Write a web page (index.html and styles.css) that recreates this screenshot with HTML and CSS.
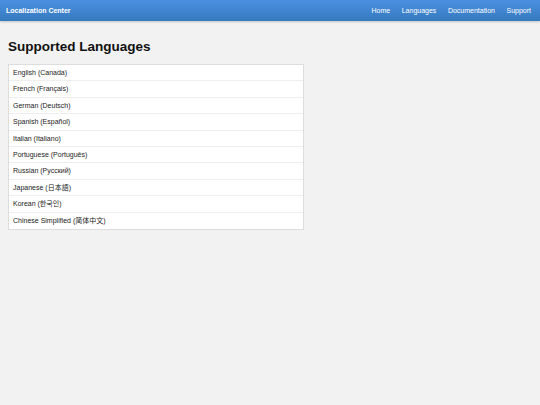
FILE: index.html
```html
<!DOCTYPE html>
<html lang="en">
<head>
    <meta charset="utf-8">
    <link rel="stylesheet" href="styles.css">
    <title>Localization Center</title>
</head>
<body>
    <header class="topbar">
        <div class="brand">Localization Center</div>
        <nav class="nav">
            <a href="#">Home</a>
            <a href="#">Languages</a>
            <a href="#">Documentation</a>
            <a href="#">Support</a>
        </nav>
    </header>
    <main class="content">
        <h1 class="title">Supported Languages</h1>
        <ul class="lang-list">
            <li>English (Canada)</li>
            <li>French (Français)</li>
            <li>German (Deutsch)</li>
            <li>Spanish (Español)</li>
            <li>Italian (Italiano)</li>
            <li>Portuguese (Português)</li>
            <li>Russian (Русский)</li>
            <li>Japanese (日本語)</li>
            <li>Korean (한국인)</li>
            <li>Chinese Simplified (简体中文)</li>
        </ul>
    </main>
</body>
</html>
```

FILE: styles.css
```css
body {
    margin: 0;
    background-color: #f2f2f2;
    font-family: "Liberation Sans", Arial, "Noto Sans CJK SC", sans-serif;
    color: #222;
}

.topbar {
    display: flex;
    justify-content: space-between;
    align-items: center;
    height: 21px;
    padding: 0 9px 0 6px;
    background: linear-gradient(to bottom, #4a90e2, #357abd);
    box-shadow: 0 1px 2px rgba(0, 0, 0, 0.2);
    color: #fff;
    font-size: 7px;
}

.brand {
    font-weight: bold;
}

.nav {
    display: flex;
    gap: 11.5px;
}

.nav a {
    color: #fff;
    text-decoration: none;
}

.content {
    padding: 0 8px;
}

.title {
    margin: 18px 0 10px;
    font-size: 13.5px;
    font-weight: bold;
    color: #111;
}

.lang-list {
    list-style: none;
    margin: 0;
    padding: 0;
    width: 294px;
    background-color: #fff;
    border: 1px solid #ddd;
}

.lang-list li {
    height: 16.4px;
    line-height: 16px;
    padding: 0 4px;
    font-size: 7px;
    color: #222;
    border-bottom: 1px solid #eee;
    box-sizing: border-box;
}

.lang-list li:last-child {
    border-bottom: none;
}
```
